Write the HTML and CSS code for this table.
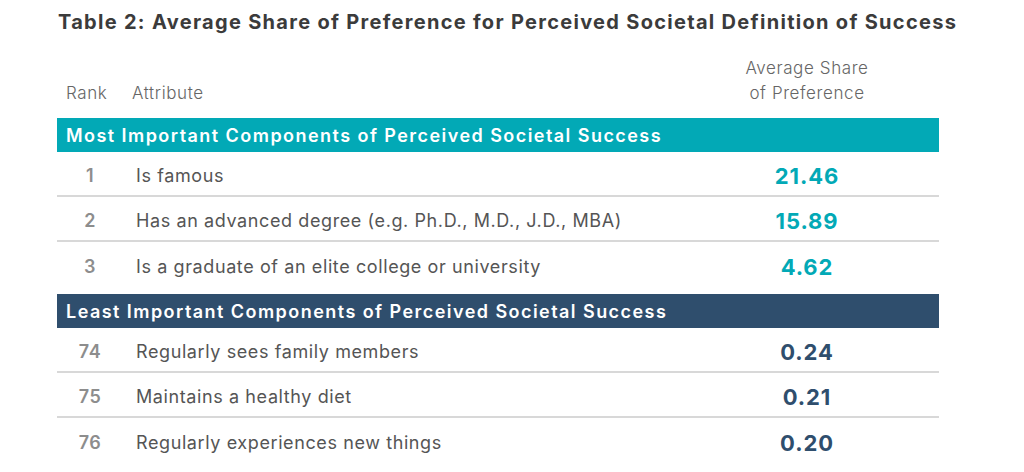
FILE: index.html
```html
<!DOCTYPE html>
<html>
<head>
<meta charset="utf-8">
<link rel="stylesheet" href="styles.css">
</head>
<body>
<div class="page">
  <h1 class="title">Table 2: Average Share of Preference for Perceived Societal Definition of Success</h1>
  <div class="table">
    <div class="head">
      <div class="h-rank">Rank</div>
      <div class="h-attr">Attribute</div>
      <div class="h-val">Average Share<br>of Preference</div>
    </div>
    <div class="section teal">
      <div class="bar">Most Important Components of Perceived Societal Success</div>
      <div class="row"><div class="rank">1</div><div class="attr">Is famous</div><div class="val">21.46</div></div>
      <div class="row"><div class="rank">2</div><div class="attr">Has an advanced degree (e.g. Ph.D., M.D., J.D., MBA)</div><div class="val">15.89</div></div>
      <div class="row"><div class="rank">3</div><div class="attr">Is a graduate of an elite college or university</div><div class="val">4.62</div></div>
    </div>
    <div class="section navy">
      <div class="bar">Least Important Components of Perceived Societal Success</div>
      <div class="row"><div class="rank">74</div><div class="attr">Regularly sees family members</div><div class="val">0.24</div></div>
      <div class="row"><div class="rank">75</div><div class="attr">Maintains a healthy diet</div><div class="val">0.21</div></div>
      <div class="row"><div class="rank">76</div><div class="attr">Regularly experiences new things</div><div class="val">0.20</div></div>
    </div>
  </div>
</div>
</body>
</html>
```

FILE: styles.css
```css
* { box-sizing: border-box; }
html, body { margin: 0; padding: 0; background: #fff; }
body { font-family: "Inter", "Liberation Sans", sans-serif; }
.page { padding: 10px 0 0 57px; width: 1024px; }
.title {
  margin: 0 0 0 1px;
  font-size: 20px;
  line-height: 24px;
  font-weight: 700;
  letter-spacing: 1.3px;
  color: #3b3b3b;
  white-space: nowrap;
}
.table { width: 882px; margin-top: 21px; }
.head {
  display: grid;
  grid-template-columns: 75px 1fr 264px;
  align-items: end;
  height: 63px;
  padding-bottom: 12px;
  color: #666;
  font-size: 17px;
  font-weight: 300;
  letter-spacing: 0.6px;
  line-height: 25px;
}
.h-rank { padding-left: 9px; }
.h-val { text-align: center; }
.section { display: flex; flex-direction: column; }
.section.navy { margin-top: 7px; }
.bar {
  height: 34px;
  display: flex;
  align-items: center;
  padding-left: 9px;
  color: #fff;
  font-size: 18px;
  font-weight: 600;
  letter-spacing: 1.45px;
  white-space: nowrap;
}
.teal .bar { background: #02a9b6; }
.navy .bar { background: #2f4e6d; }
.row {
  display: grid;
  grid-template-columns: 66px 1fr 264px;
  align-items: center;
  height: 45px;
  padding-top: 3px;
  border-bottom: 2px solid #d8d8d8;
}
.row:last-child { border-bottom: none; }
.rank { text-align: center; color: #8d8d8d; font-weight: 600; font-size: 18px; letter-spacing: 0.5px; }
.attr { padding-left: 13px; color: #555; font-size: 18px; font-weight: 400; letter-spacing: 0.6px; white-space: nowrap; }
.val { text-align: center; font-size: 22px; font-weight: 700; letter-spacing: 0.9px; padding-top: 2px; }
.teal .val { color: #02a9b6; }
.navy .val { color: #2f4e6d; }
```
